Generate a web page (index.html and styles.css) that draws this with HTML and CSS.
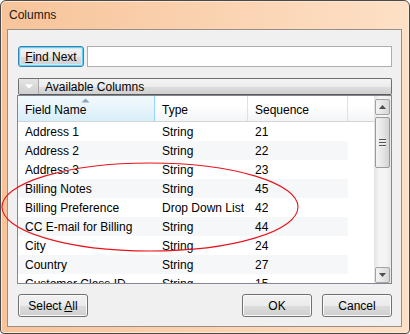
FILE: index.html
```html
<!DOCTYPE html>
<html lang="en">
<head>
  <meta charset="UTF-8" />
  <title>Columns</title>
  <link rel="stylesheet" href="styles.css">
</head>
<body>
  <div class="window">
    <div class="titlebar">Columns</div>

    <div class="client">
      <div class="find-row">
        <button class="btn btn-default find-btn"><u>F</u>ind Next</button>
        <input class="find-input" type="text" />
      </div>

      <div class="group-bar">
        <span class="group-toggle">
          <svg width="12" height="7" viewBox="0 0 12 7"><path d="M1 1 L6 6 L11 1 Z" fill="#fff" stroke="#d6d6d6" stroke-width="0.6"/></svg>
        </span>
        <span class="group-label">Available Columns</span>
      </div>

      <div class="grid">
        <div class="grid-body">
          <div class="grid-head">
            <div class="col col-name sorted">Field Name
              <svg class="sort-arrow" width="9" height="5" viewBox="0 0 9 5"><path d="M0.5 4.5 L4.5 0.5 L8.5 4.5 Z" fill="#8aa4bd"/></svg>
            </div>
            <div class="col col-type">Type</div>
            <div class="col col-seq">Sequence</div>
            <div class="col col-fill"></div>
          </div>
          <div class="row"><div class="col col-name">Address 1</div><div class="col col-type">String</div><div class="col col-seq">21</div></div>
          <div class="row alt"><div class="col col-name">Address 2</div><div class="col col-type">String</div><div class="col col-seq">22</div></div>
          <div class="row"><div class="col col-name">Address 3</div><div class="col col-type">String</div><div class="col col-seq">23</div></div>
          <div class="row alt"><div class="col col-name">Billing Notes</div><div class="col col-type">String</div><div class="col col-seq">45</div></div>
          <div class="row"><div class="col col-name">Billing Preference</div><div class="col col-type">Drop Down List</div><div class="col col-seq">42</div></div>
          <div class="row alt"><div class="col col-name">CC E-mail for Billing</div><div class="col col-type">String</div><div class="col col-seq">44</div></div>
          <div class="row"><div class="col col-name">City</div><div class="col col-type">String</div><div class="col col-seq">24</div></div>
          <div class="row alt"><div class="col col-name">Country</div><div class="col col-type">String</div><div class="col col-seq">27</div></div>
          <div class="row"><div class="col col-name">Customer Class ID</div><div class="col col-type">String</div><div class="col col-seq">15</div></div>
        </div>

        <div class="scrollbar">
          <div class="sb-btn">
            <svg width="7" height="4" viewBox="0 0 7 4"><path d="M0 4 L3.5 0 L7 4 Z" fill="#4d4d4d"/></svg>
          </div>
          <div class="sb-thumb">
            <span class="grip"></span><span class="grip"></span><span class="grip"></span>
          </div>
          <div class="sb-track"></div>
          <div class="sb-btn">
            <svg width="7" height="4" viewBox="0 0 7 4"><path d="M0 0 L3.5 4 L7 0 Z" fill="#4d4d4d"/></svg>
          </div>
        </div>
      </div>

      <div class="footer">
        <button class="btn">Select <u>A</u>ll</button>
        <div class="footer-right">
          <button class="btn">OK</button>
          <button class="btn">Cancel</button>
        </div>
      </div>
    </div>

    <svg class="annotation" width="410" height="334" viewBox="0 0 410 334">
      <ellipse cx="150" cy="207" rx="148" ry="44" fill="none" stroke="#e8141c" stroke-width="1.1"/>
    </svg>
  </div>
</body>
</html>
```

FILE: styles.css
```css
body {
  margin: 0;
  font-family: "Liberation Sans", Arial, sans-serif;
  font-size: 12px;
  color: #000;
  background: #fff;
}

.window {
  position: relative;
  width: 410px;
  height: 334px;
  box-sizing: border-box;
  border: 1px solid #4a4a4a;
  border-radius: 6px 6px 4px 4px;
  background: linear-gradient(to right, #f7c49a, #fad2b0 50%, #fde0c6);
  box-shadow: inset 0 0 0 1px #fde6d2;
  padding: 0 7px 6px 6px;
}

.titlebar {
  height: 28px;
  line-height: 28px;
  padding-left: 2px;
  color: #1a1a1a;
}

.client {
  height: 298px;
  box-sizing: border-box;
  border: 1px solid #9a8f86;
  background: #f0f0f0;
  padding: 16px 0 0 9px;
}

.btn {
  font-family: inherit;
  font-size: 12px;
  color: #000;
  height: 23px;
  width: 70px;
  padding: 0;
  border: 1px solid #707070;
  border-radius: 3px;
  background: linear-gradient(#f2f2f2 0%, #ebebeb 50%, #dddddd 51%, #cfcfcf 100%);
  box-shadow: inset 0 0 0 1px #fbfbfb;
}

.btn-default {
  border-color: #3c7fb1;
  box-shadow: inset 0 0 0 1px #5fd0f3, inset 0 0 0 2px #c9eefb;
}

.find-row {
  display: flex;
  gap: 3px;
  width: 375px;
  height: 21px;
  padding-left: 1px;
  box-sizing: border-box;
}

.find-btn {
  width: 66px;
  height: 21px;
}

.find-input {
  flex: 1;
  height: 21px;
  box-sizing: border-box;
  border: 1px solid #abadb3;
  margin: 0;
  background: #fff;
}

.group-bar {
  display: flex;
  align-items: center;
  margin: 11px 0 0 1px;
  width: 374px;
  height: 17px;
  box-sizing: border-box;
  border: 1px solid #707070;
  border-bottom-color: #5a5a5a;
  border-radius: 2px;
  background: linear-gradient(#f4f4f4 0%, #ececec 50%, #dedede 51%, #d0d0d0 100%);
}

.group-toggle {
  width: 19px;
  height: 15px;
  display: flex;
  align-items: center;
  justify-content: center;
  border-right: 1px solid #a8a8a8;
  background: linear-gradient(#e4e4e4, #cfcfcf);
}

.group-label {
  padding-left: 6px;
}

.grid {
  display: flex;
  width: 375px;
  height: 189px;
  box-sizing: border-box;
  border: 1px solid #828790;
  background: #fff;
}

.grid-body {
  width: 356px;
  overflow: hidden;
}

.grid-head {
  display: flex;
  height: 26px;
  box-sizing: border-box;
  border-bottom: 1px solid #d5d5d5;
  background: linear-gradient(#ffffff 0%, #ffffff 40%, #f3f4f6 100%);
}

.grid-head .col {
  padding-top: 3px;
  line-height: 22px;
  border-right: 1px solid #dde1e6;
}

.grid-head .col.sorted {
  position: relative;
  background: linear-gradient(#f2f9fc 0%, #e8f4fb 45%, #d7eef9 100%);
  border-right-color: #96d9f9;
}

.grid-head .col-fill {
  border-right: none;
}

.sort-arrow {
  position: absolute;
  left: 63px;
  top: 2px;
}

.row {
  display: flex;
  height: 19px;
  line-height: 20px;
}

.row.alt .col-name,
.row.alt .col-type,
.row.alt .col-seq {
  background: #f6f7f8;
}

.col {
  box-sizing: border-box;
  padding-left: 7px;
  white-space: nowrap;
  overflow: hidden;
}

.col-name { width: 137px; }
.col-type { width: 93px; }
.col-seq { width: 100px; }
.col-fill { width: 26px; }

.scrollbar {
  width: 17px;
  display: flex;
  flex-direction: column;
  padding: 3px 0 0 1px;
  box-sizing: border-box;
  background: linear-gradient(to right, #e3e3e3, #f4f4f4 30%, #f4f4f4 70%, #e8e8e8);
}

.sb-btn {
  width: 15px;
  height: 16px;
  box-sizing: border-box;
  border: 1px solid #a3a3a3;
  border-radius: 2px;
  display: flex;
  align-items: center;
  justify-content: center;
  background: linear-gradient(to right, #f3f3f3, #e6e6e6 50%, #d6d6d6);
}

.sb-thumb {
  width: 15px;
  height: 51px;
  margin-top: 2px;
  box-sizing: border-box;
  border: 1px solid #9a9a9a;
  border-radius: 2px;
  display: flex;
  flex-direction: column;
  align-items: center;
  justify-content: center;
  gap: 1px;
  background: linear-gradient(to right, #f3f3f3, #e6e6e6 50%, #d2d2d2);
}

.grip {
  width: 7px;
  height: 1px;
  background: #555;
  border-bottom: 1px solid #eee;
}

.sb-track {
  flex: 1;
}

.footer {
  display: flex;
  justify-content: space-between;
  width: 375px;
  margin-top: 10px;
  padding-left: 1px;
  box-sizing: border-box;
}

.footer-right {
  display: flex;
  gap: 10px;
}

.annotation {
  position: absolute;
  left: -1px;
  top: -1px;
  pointer-events: none;
}
```
